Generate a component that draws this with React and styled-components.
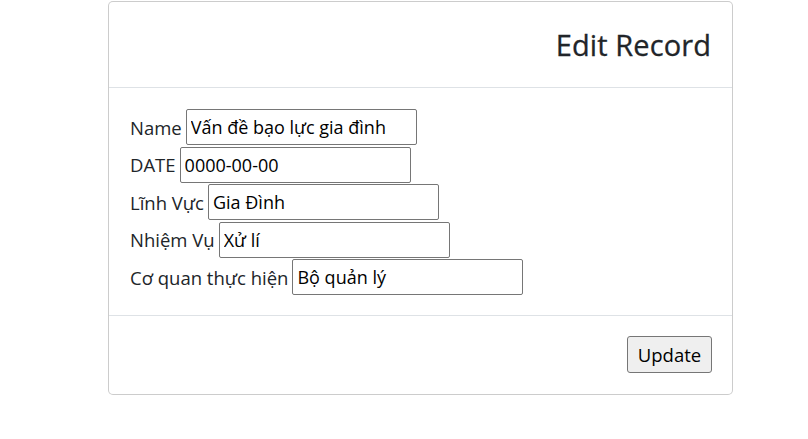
import React from "react";
import styled, { createGlobalStyle } from "styled-components";

const Global = createGlobalStyle`
  html, body { margin: 0; padding: 0; background: #fff; }
  body { font-family: "Open Sans", "Noto Sans", sans-serif; color: #212529; }
  * { box-sizing: border-box; }
`;

const Page = styled.div`
  padding: 1px 0 0 108px;
  width: 808px;
`;

const Card = styled.div`
  width: 625px;
  border: 1px solid rgba(0, 0, 0, 0.2);
  border-radius: 5px;
  background: #fff;
  display: flex;
  flex-direction: column;
`;

const Header = styled.div`
  display: flex;
  justify-content: flex-end;
  padding: 20px 21px 20px 20px;
  border-bottom: 1px solid #dee2e6;
`;

const Title = styled.h4`
  margin: 0;
  font-size: 29px;
  font-weight: 400;
  line-height: 45px;
  letter-spacing: 0.1px;
  color: #212529;
  -webkit-text-stroke: 0.3px #212529;
`;

const Body = styled.div`
  padding: 21px 20px 20px 21px;
  display: flex;
  flex-direction: column;
  gap: 1.5px;
`;

const Row = styled.div`
  display: flex;
  align-items: center;
  height: 36px;
  gap: 4px;
`;

const Label = styled.label`
  font-size: 18.5px;
  letter-spacing: 0;
  color: #212529;
  white-space: nowrap;
`;

const Input = styled.input`
  width: 231px;
  height: 36px;
  border: 1px solid #767676;
  border-radius: 2px;
  padding: 1px 4px;
  font-family: "Open Sans", "Noto Sans", sans-serif;
  font-size: 18px;
  letter-spacing: 0;
  color: #000;
  background: #fff;
  outline: none;
`;

const Footer = styled.div`
  display: flex;
  justify-content: flex-end;
  padding: 15px 15px 16px;
  border-top: 1px solid #dee2e6;
`;

const Button = styled.button`
  margin: 5px;
  width: 85px;
  height: 37px;
  border: 1px solid #767676;
  border-radius: 3px;
  background: #efefef;
  font-family: "Open Sans", "Noto Sans", sans-serif;
  font-size: 18.5px;
  letter-spacing: 0;
  color: #000;
  padding: 0;
`;

const fields = [
  { label: "Name", value: "Vấn đề bạo lực gia đình" },
  { label: "DATE", value: "0000-00-00" },
  { label: "Lĩnh Vực", value: "Gia Đình" },
  { label: "Nhiệm Vụ", value: "Xử lí" },
  { label: "Cơ quan thực hiện", value: "Bộ quản lý" },
];

export default function App() {
  return (
    <Page>
      <Global />
      <Card>
        <Header>
          <Title>Edit Record</Title>
        </Header>
        <Body>
          {fields.map((f) => (
            <Row key={f.label}>
              <Label>{f.label}</Label>
              <Input defaultValue={f.value} />
            </Row>
          ))}
        </Body>
        <Footer>
          <Button>Update</Button>
        </Footer>
      </Card>
    </Page>
  );
}
